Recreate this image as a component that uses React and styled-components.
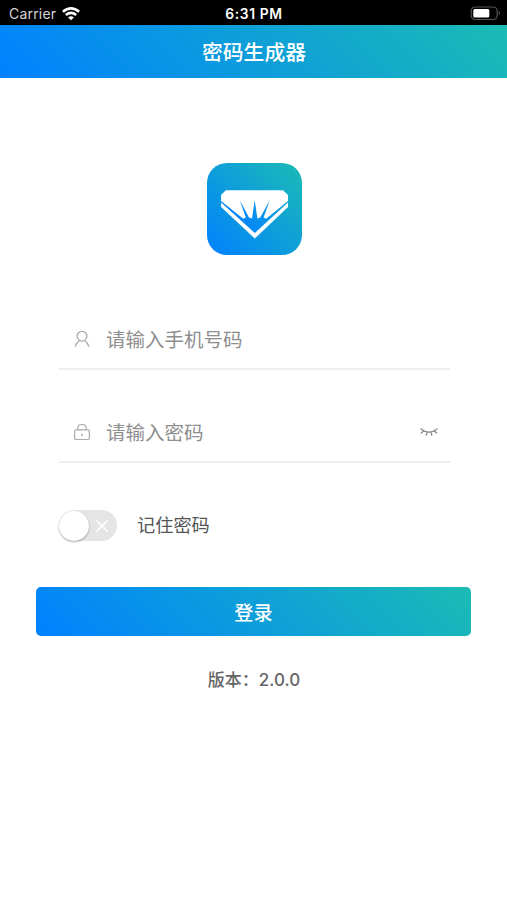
import React from "react";
import styled, { createGlobalStyle } from "styled-components";

const GlobalStyle = createGlobalStyle`
  * { box-sizing: border-box; }
  body {
    margin: 0;
    background: #fff;
    font-family: Inter, "Noto Sans CJK SC", sans-serif;
  }
`;

const brand = "linear-gradient(45deg, #0081ff, #1cbbb4)";

const Screen = styled.div`
  display: flex;
  flex-direction: column;
  width: 507px;
  height: 900px;
  overflow: hidden;
  background: #fff;
`;

const StatusBar = styled.div`
  display: grid;
  grid-template-columns: 1fr auto 1fr;
  align-items: center;
  height: 25px;
  flex: none;
  padding: 2px 5px 0 9px;
  background: #000;
  color: #fff;
  font-size: 14px;
  line-height: 22px;
`;

const Carrier = styled.div`
  display: flex;
  align-items: center;
  gap: 6px;
  color: #d6d6d6;
  letter-spacing: 0.2px;
`;

const Clock = styled.div`
  margin-right: 3px;
  font-weight: 600;
  font-size: 13.8px;
  letter-spacing: 0.65px;
`;

const Battery = styled.svg`
  justify-self: end;
`;

const Header = styled.header`
  display: flex;
  align-items: center;
  justify-content: center;
  flex: none;
  height: 53px;
  padding: 0 0 1px 1px;
  background: ${brand};
  color: #fff;
  font-family: "Noto Sans CJK SC", sans-serif;
  font-size: 20.8px;
  font-weight: 500;
  line-height: 30px;
`;

const Logo = styled.div`
  display: flex;
  flex: none;
  align-self: center;
  width: 95px;
  height: 92px;
  margin: 85px 0 0 2px;
  border-radius: 20px;
  background: ${brand};
`;

const Form = styled.main`
  display: flex;
  flex-direction: column;
  margin: 52px 57px 0 59px;
`;

const Field = styled.div`
  display: flex;
  align-items: center;
  height: 63px;
  margin-bottom: ${(p) => p.$gap}px;
  padding: 3px 11px 0 14px;
  border-bottom: 2px solid #eeeeee;
`;

const Placeholder = styled.span`
  flex: 1;
  margin-left: 15px;
  color: #8e8e8e;
  font-family: "Noto Sans CJK SC", sans-serif;
  font-size: 19.5px;
  line-height: 28px;
`;

const Remember = styled.div`
  display: flex;
  align-items: center;
  gap: 20px;
`;

const Toggle = styled.div`
  display: flex;
  align-items: center;
  justify-content: space-between;
  width: 58px;
  height: 31px;
  padding-right: 8px;
  border-radius: 16px;
  background: #e5e5e5;
`;

const Knob = styled.div`
  width: 30px;
  height: 30px;
  border-radius: 50%;
  background: #fff;
  box-shadow: 0 1px 2px rgba(0, 0, 0, 0.35);
`;

const RememberLabel = styled.span`
  margin-top: -4px;
  color: #555;
  font-family: "Noto Sans CJK SC", sans-serif;
  font-size: 18.2px;
  line-height: 28px;
`;

const LoginButton = styled.button`
  flex: none;
  height: 49px;
  margin: 46px 36px 0;
  padding: 0;
  border: 0;
  border-radius: 5px;
  background: ${brand};
  color: #fff;
  font-family: "Noto Sans CJK SC", sans-serif;
  font-size: 19.2px;
  font-weight: 500;
  line-height: 28px;
`;

const Version = styled.footer`
  margin: 31px 0 0 1px;
  color: #666;
  font-size: 17px;
  font-weight: 500;
  line-height: 26px;
  text-align: center;
`;

export default function App() {
  return (
    <>
      <GlobalStyle />
      <Screen>
        <StatusBar>
          <Carrier>
            Carrier
            <svg width="18" height="14" viewBox="0 0 18 14" fill="none" stroke="#fff" strokeWidth="2.6">
              <path d="M0.9 4.8 Q9 -2 17.1 4.8" />
              <path d="M3.8 8 Q9 3.8 14.2 8" />
              <path d="M9 13.2 L6.1 10.4 Q9 8.2 11.9 10.4 Z" fill="#fff" stroke="none" />
            </svg>
          </Carrier>
          <Clock>6:31 PM</Clock>
          <Battery width="32" height="15" viewBox="0 0 32 15">
            <rect x="1.2" y="1" width="26" height="12.5" rx="4" fill="none" stroke="#555" strokeWidth="1.2" />
            <rect x="3.3" y="3" width="16" height="8.5" rx="1.5" fill="#fff" />
            <path d="M28.8 5 Q31 7.2 28.8 9.5 Z" fill="#666" />
          </Battery>
        </StatusBar>
        <Header>密码生成器</Header>
        <Logo>
          <svg width="95" height="92" viewBox="-0.8 0 95 92">
            <defs>
              <linearGradient id="gem" x1="30" y1="60" x2="80" y2="36" gradientUnits="userSpaceOnUse">
                <stop offset="0" stopColor="#0384fb" />
                <stop offset="1" stopColor="#0fa3d7" />
              </linearGradient>
            </defs>
            <path fill="#fff" d="M18 27.2 H75.2 L80.2 32 V44 L47 75.4 L13.3 44 V32 Z" />
            <path
              fill="url(#gem)"
              d="M13.3 38 L35.5 55.8 L38 54.5 L32 37.3 L41.2 54.5 L44.2 55.5 L46.9 37.3 L49.6 55.5 L52.4 54.5 L62 37.3 L55.8 54.5 L58.3 55.8 L80.2 38 V39.5 L47 70 L13.3 39.5 Z"
            />
          </svg>
        </Logo>
        <Form>
          <Field $gap={30}>
            <svg width="18" height="20" viewBox="0 0 18 20" fill="none" stroke="#aaa" strokeWidth="1.3" strokeLinecap="round">
              <circle cx="9" cy="7.2" r="4.9" />
              <path d="M2.4 17.2 Q3.2 13.7 6.3 11.8 M11.7 11.8 Q14.8 13.7 15.6 17.2" />
            </svg>
            <Placeholder>请输入手机号码</Placeholder>
          </Field>
          <Field $gap={47}>
            <svg width="18" height="20" viewBox="0 0 18 20" fill="none" stroke="#aaa" strokeWidth="1.2">
              <rect x="1.6" y="7.9" width="14.8" height="9.6" rx="1.5" />
              <path d="M4.8 7.7 V6.3 Q4.8 2.5 9 2.5 T13.2 6.3 V7.7" />
              <path d="M9 11.7 V13.9" strokeWidth="1.5" />
            </svg>
            <Placeholder>请输入密码</Placeholder>
            <svg width="20" height="12" viewBox="0 0 20 12" fill="none" stroke="#888" strokeWidth="1.3" strokeLinecap="round">
              <path d="M2 3 Q10 9.4 18 3 M4.6 5 L2.4 7 M8 6.4 L7.2 9.2 M12 6.4 L12.8 9.2 M15.4 5 L17.6 7" />
            </svg>
          </Field>
          <Remember>
            <Toggle>
              <Knob />
              <svg width="14" height="14" viewBox="0 0 14 14" stroke="#fff" strokeWidth="1.5" strokeLinecap="round">
                <path d="M2 2 L12 12 M12 2 L2 12" />
              </svg>
            </Toggle>
            <RememberLabel>记住密码</RememberLabel>
          </Remember>
        </Form>
        <LoginButton>登录</LoginButton>
        <Version>版本：2.0.0</Version>
      </Screen>
    </>
  );
}
